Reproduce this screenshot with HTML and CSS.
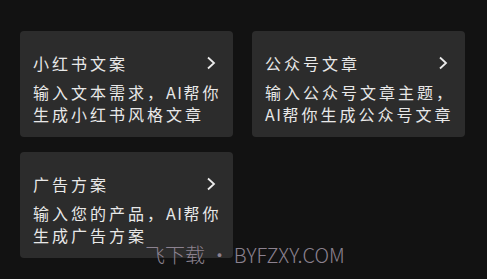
FILE: index.html
```html
<!DOCTYPE html>
<html lang="zh">
<head>
<meta charset="utf-8">
<link rel="stylesheet" href="styles.css">
</head>
<body>
<div class="page">
  <div class="grid">
    <div class="card">
      <div class="head"><span class="title">小红书文案</span><svg class="chev" width="10" height="14" viewBox="0 0 10 14"><path d="M2 1.5 L8 7 L2 12.5" fill="none" stroke="#ececec" stroke-width="1.8"/></svg></div>
      <div class="desc"><span class="line">输入文本需求，<span class="latin">AI</span>帮你</span><span class="line">生成小红书风格文章</span></div>
    </div>
    <div class="card">
      <div class="head"><span class="title">公众号文章</span><svg class="chev" width="10" height="14" viewBox="0 0 10 14"><path d="M2 1.5 L8 7 L2 12.5" fill="none" stroke="#ececec" stroke-width="1.8"/></svg></div>
      <div class="desc"><span class="line">输入公众号文章主题，</span><span class="line"><span class="latin">AI</span>帮你生成公众号文章</span></div>
    </div>
    <div class="card">
      <div class="head"><span class="title">广告方案</span><svg class="chev" width="10" height="14" viewBox="0 0 10 14"><path d="M2 1.5 L8 7 L2 12.5" fill="none" stroke="#ececec" stroke-width="1.8"/></svg></div>
      <div class="desc"><span class="line">输入您的产品，<span class="latin">AI</span>帮你</span><span class="line">生成广告方案</span></div>
    </div>
  </div>
  <div class="watermark">飞下载 • BYFZXY.COM</div>
</div>
</body>
</html>
```
FILE: styles.css
```css
html, body {
  margin: 0;
  padding: 0;
  background: #121212;
}
body {
  width: 487px;
  height: 279px;
  overflow: hidden;
  font-family: "Noto Sans CJK SC", "Noto Sans", sans-serif;
}
.page {
  position: relative;
  width: 487px;
  height: 279px;
  padding: 31px 0 0 20px;
  box-sizing: border-box;
}
.grid {
  display: grid;
  grid-template-columns: 213px 213px;
  column-gap: 19px;
  row-gap: 15px;
}
.card {
  background: #2c2c2c;
  border-radius: 4px;
  height: 106px;
  box-sizing: border-box;
  padding: 21px 17px 0 13px;
  color: #e8e8e8;
}
.head {
  display: flex;
  align-items: center;
  justify-content: space-between;
  height: 22px;
}
.title {
  font-size: 16px;
  letter-spacing: 3px;
  line-height: 22px;
}
.chev {
  display: block;
}
.desc {
  margin-top: 7px;
  display: flex;
  flex-direction: column;
}
.line {
  font-size: 16px;
  letter-spacing: 3px;
  line-height: 22px;
  white-space: nowrap;
}
.latin {
  letter-spacing: 1.5px;
}
.watermark {
  position: absolute;
  left: 145px;
  top: 242px;
  font-size: 20px;
  font-weight: 300;
  color: #8c8290;
  line-height: 26px;
  white-space: nowrap;
}
```
